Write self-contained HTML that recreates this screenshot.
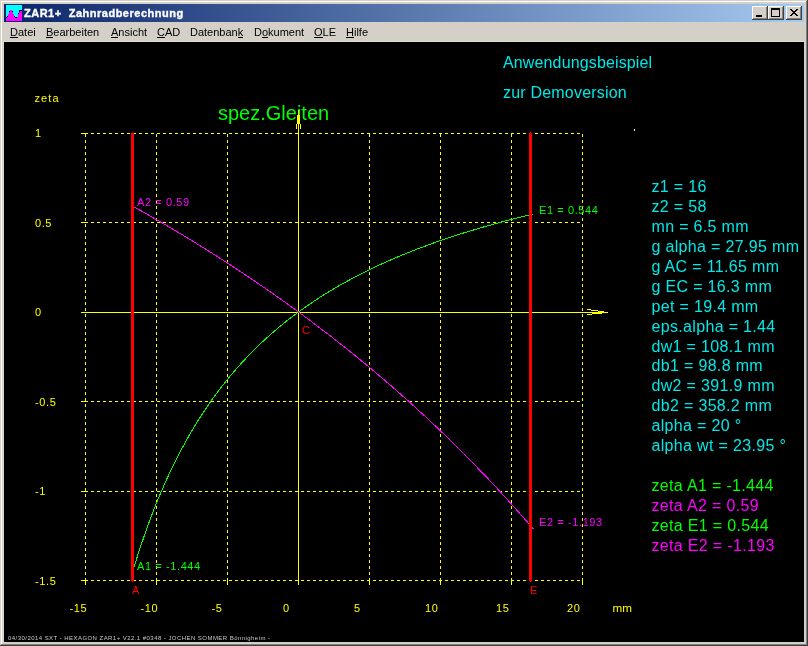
<!DOCTYPE html>
<html><head><meta charset="utf-8">
<style>
html,body{margin:0;padding:0;width:808px;height:646px;overflow:hidden;background:#D4D0C8;}
body{position:relative;font-family:"Liberation Sans",sans-serif;}
.abs{position:absolute;}
#title{left:4px;top:4px;width:800px;height:18px;background:linear-gradient(to right,#0A246A,#A6CAF0);}
#ttext{left:24px;top:4px;height:18px;line-height:18px;color:#fff;font-weight:bold;font-size:12px;white-space:pre;}
.btn{position:absolute;top:6px;width:16px;height:14px;background:#D4D0C8;box-sizing:border-box;
 box-shadow:inset -1px -1px #404040, inset 1px 1px #FFFFFF, inset -2px -2px #808080;}
#menu{left:4px;top:22px;width:800px;height:20px;}
.mi{will-change:transform;position:absolute;top:22px;height:20px;line-height:20px;font-size:11px;color:#000;white-space:pre;}
.mi u{text-decoration:none;position:relative;} .mi u::after{content:"";position:absolute;left:0;right:0;bottom:0px;height:1px;background:#000;}
#client{left:4px;top:42px;width:800px;height:600px;background:#000;}
svg text{font-family:"Liberation Sans",sans-serif;}
</style></head><body>
<div class="abs" style="left:0;top:0;width:808px;height:1px;background:#D4D0C8"></div>
<div class="abs" style="left:1px;top:1px;width:805px;height:1px;background:#FFFFFF"></div>
<div class="abs" style="left:1px;top:1px;width:1px;height:643px;background:#FFFFFF"></div>
<div class="abs" style="left:807px;top:0;width:1px;height:646px;background:#404040"></div>
<div class="abs" style="left:806px;top:1px;width:1px;height:644px;background:#808080"></div>
<div class="abs" style="left:0;top:645px;width:808px;height:1px;background:#404040"></div>
<div class="abs" style="left:1px;top:644px;width:806px;height:1px;background:#808080"></div>
<div id="title" class="abs"></div>
<svg class="abs" style="left:6px;top:5px" width="16" height="16" viewBox="0 0 16 16" shape-rendering="crispEdges"><rect width="16" height="16" fill="#00FFFF"/><rect x="0" y="13" width="1" height="3" fill="#FF00FF"/><rect x="1" y="12" width="1" height="4" fill="#FF00FF"/><rect x="2" y="9" width="1" height="7" fill="#FF00FF"/><rect x="3" y="7" width="1" height="9" fill="#FF00FF"/><rect x="4" y="5" width="1" height="11" fill="#FF00FF"/><rect x="5" y="5" width="1" height="11" fill="#FF00FF"/><rect x="6" y="7" width="1" height="9" fill="#FF00FF"/><rect x="7" y="9" width="1" height="7" fill="#FF00FF"/><rect x="8" y="12" width="1" height="4" fill="#FF00FF"/><rect x="9" y="13" width="1" height="3" fill="#FF00FF"/><rect x="10" y="13" width="1" height="3" fill="#FF00FF"/><rect x="11" y="12" width="1" height="4" fill="#FF00FF"/><rect x="12" y="9" width="1" height="7" fill="#FF00FF"/><rect x="13" y="7" width="1" height="9" fill="#FF00FF"/><rect x="14" y="6" width="1" height="10" fill="#FF00FF"/><rect x="15" y="6" width="1" height="10" fill="#FF00FF"/><rect x="0" y="12" width="1" height="1" fill="#000"/><rect x="1" y="11" width="1" height="1" fill="#000"/><rect x="3" y="6" width="1" height="1" fill="#000"/><rect x="6" y="6" width="1" height="1" fill="#000"/><rect x="8" y="11" width="1" height="1" fill="#000"/><rect x="9" y="12" width="1" height="1" fill="#000"/><rect x="10" y="12" width="1" height="1" fill="#000"/><rect x="12" y="8" width="1" height="1" fill="#000"/><rect x="13" y="5" width="1" height="1" fill="#000"/><rect x="13" y="6" width="1" height="1" fill="#000"/><rect x="14" y="5" width="1" height="1" fill="#000"/><rect x="15" y="5" width="1" height="1" fill="#000"/></svg>
<svg class="abs" style="left:0;top:0;will-change:transform" width="300" height="22"><text x="24" y="17" font-size="11" font-weight="bold" fill="#fff" stroke="#fff" stroke-width="0.35" letter-spacing="0.5" style="white-space:pre">ZAR1+  Zahnradberechnung</text></svg>
<div class="btn" style="left:752px"><div class="abs" style="left:4px;top:9px;width:6px;height:2px;background:#000"></div></div>
<div class="btn" style="left:768px"><div class="abs" style="left:3px;top:2px;width:9px;height:9px;box-sizing:border-box;border:1px solid #000;border-top-width:2px"></div></div>
<div class="btn" style="left:786px"><svg class="abs" style="left:4px;top:3px" width="8" height="7" viewBox="0 0 8 7" shape-rendering="crispEdges"><path d="M0,0h2v1h-2zM6,0h2v1h-2zM1,1h2v1h-2zM5,1h2v1h-2zM2,2h4v1h-4zM3,3h2v1h-2zM2,4h4v1h-4zM1,5h2v1h-2zM5,5h2v1h-2zM0,6h2v1h-2zM6,6h2v1h-2z" fill="#000"/></svg></div>
<div class="mi" style="left:9.5px"><u>D</u>atei</div>
<div class="mi" style="left:46px"><u>B</u>earbeiten</div>
<div class="mi" style="left:111px"><u>A</u>nsicht</div>
<div class="mi" style="left:157px"><u>C</u>AD</div>
<div class="mi" style="left:190px">Datenban<u>k</u></div>
<div class="mi" style="left:254px">D<u>o</u>kument</div>
<div class="mi" style="left:314px"><u>O</u>LE</div>
<div class="mi" style="left:346px"><u>H</u>ilfe</div>
<div class="abs" style="left:3px;top:41px;width:802px;height:1px;background:#E2DED6"></div>
<div class="abs" style="left:3px;top:41px;width:1px;height:602px;background:#DCD8D0"></div>
<div id="client" class="abs"></div>
<svg class="abs" style="left:0;top:0;will-change:transform" width="808" height="646" viewBox="0 0 808 646">
<g fill="#00E8E8" font-size="16" letter-spacing="0.2">
<text x="503" y="68" letter-spacing="0.14">Anwendungsbeispiel</text>
<text x="503" y="98">zur Demoversion</text>
</g>
<text x="218" y="120" font-size="20" fill="#00FF00">spez.Gleiten</text>
<g fill="#FFFF00" font-size="11" letter-spacing="0.6">
<text x="34.5" y="102" letter-spacing="1.1">zeta</text>
<text x="35" y="137">1</text>
<text x="35" y="227">0.5</text>
<text x="35" y="316">0</text>
<text x="35" y="406">-0.5</text>
<text x="35" y="495">-1</text>
<text x="35" y="585">-1.5</text>
<text x="69.5" y="612">-15</text>
<text x="140.5" y="612">-10</text>
<text x="211.5" y="612">-5</text>
<text x="283" y="612">0</text>
<text x="354" y="612">5</text>
<text x="425" y="612">10</text>
<text x="496" y="612">15</text>
<text x="567" y="612">20</text>
<text x="612.5" y="612" letter-spacing="0" textLength="19.5" lengthAdjust="spacingAndGlyphs">mm</text>
</g>
<g stroke="#FFFF00" stroke-width="1" shape-rendering="crispEdges" fill="none">
<style>.d{stroke-dasharray:3 3}</style>
<line x1="81" y1="133.5" x2="85" y2="133.5"/>
<line class="d" x1="85" y1="133.5" x2="582" y2="133.5"/>
<line x1="81" y1="222.5" x2="85" y2="222.5"/>
<line class="d" x1="85" y1="222.5" x2="582" y2="222.5"/>
<line x1="81" y1="401.5" x2="85" y2="401.5"/>
<line class="d" x1="85" y1="401.5" x2="582" y2="401.5"/>
<line x1="81" y1="491.5" x2="85" y2="491.5"/>
<line class="d" x1="85" y1="491.5" x2="582" y2="491.5"/>
<line x1="81" y1="580.5" x2="85" y2="580.5"/>
<line class="d" x1="85" y1="580.5" x2="582" y2="580.5"/>
<line class="d" x1="85.5" y1="134" x2="85.5" y2="580"/>
<line x1="85.5" y1="580" x2="85.5" y2="585"/>
<line class="d" x1="156.5" y1="134" x2="156.5" y2="580"/>
<line x1="156.5" y1="580" x2="156.5" y2="585"/>
<line class="d" x1="227.5" y1="134" x2="227.5" y2="580"/>
<line x1="227.5" y1="580" x2="227.5" y2="585"/>
<line class="d" x1="369.5" y1="134" x2="369.5" y2="580"/>
<line x1="369.5" y1="580" x2="369.5" y2="585"/>
<line class="d" x1="440.5" y1="134" x2="440.5" y2="580"/>
<line x1="440.5" y1="580" x2="440.5" y2="585"/>
<line class="d" x1="511.5" y1="134" x2="511.5" y2="580"/>
<line x1="511.5" y1="580" x2="511.5" y2="585"/>
<line class="d" x1="582.5" y1="134" x2="582.5" y2="580"/>
<line x1="582.5" y1="580" x2="582.5" y2="585"/>
<line x1="81" y1="312.5" x2="608" y2="312.5"/>
<line x1="298.5" y1="110" x2="298.5" y2="585"/>
</g>
<g fill="#FFFF00" shape-rendering="crispEdges"><rect x="297" y="115" width="3" height="9"/><rect x="296" y="124" width="1" height="5"/><rect x="300" y="124" width="1" height="5"/><rect x="587" y="309" width="4" height="1"/><rect x="591" y="310" width="7" height="1"/><rect x="598" y="311" width="6" height="1"/><rect x="592" y="313" width="10" height="1"/><rect x="587" y="314" width="5" height="1"/></g>
<g fill="none" stroke-width="1" shape-rendering="crispEdges">
<polyline points="131.5,575.6 134.0,567.2 136.5,559.1 139.0,551.2 141.6,543.6 144.1,536.3 146.6,529.1 149.1,522.2 151.6,515.5 154.1,509.1 156.6,502.8 159.1,496.7 161.7,490.7 164.2,484.9 166.7,479.3 169.2,473.9 171.7,468.6 174.2,463.4 176.7,458.4 179.2,453.5 181.8,448.7 184.3,444.1 186.8,439.6 189.3,435.1 191.8,430.8 194.3,426.6 196.8,422.5 199.3,418.5 201.9,414.6 204.4,410.8 206.9,407.1 209.4,403.4 211.9,399.8 214.4,396.4 216.9,392.9 219.4,389.6 221.9,386.3 224.5,383.1 227.0,380.0 229.5,376.9 232.0,373.9 234.5,371.0 237.0,368.1 239.5,365.3 242.1,362.5 244.6,359.8 247.1,357.1 249.6,354.5 252.1,351.9 254.6,349.4 257.1,347.0 259.6,344.5 262.1,342.1 264.7,339.8 267.2,337.5 269.7,335.3 272.2,333.1 274.7,330.9 277.2,328.7 279.7,326.6 282.2,324.6 284.8,322.5 287.3,320.5 289.8,318.6 292.3,316.6 294.8,314.7 297.3,312.9 299.8,311.0 302.4,309.2 304.9,307.5 307.4,305.7 309.9,304.0 312.4,302.3 314.9,300.6 317.4,299.0 319.9,297.3 322.4,295.7 325.0,294.2 327.5,292.6 330.0,291.1 332.5,289.6 335.0,288.1 337.5,286.6 340.0,285.2 342.6,283.8 345.1,282.4 347.6,281.0 350.1,279.6 352.6,278.3 355.1,276.9 357.6,275.6 360.1,274.3 362.6,273.1 365.2,271.8 367.7,270.6 370.2,269.3 372.7,268.1 375.2,266.9 377.7,265.8 380.2,264.6 382.8,263.5 385.3,262.3 387.8,261.2 390.3,260.1 392.8,259.0 395.3,257.9 397.8,256.9 400.3,255.8 402.8,254.8 405.4,253.8 407.9,252.7 410.4,251.7 412.9,250.7 415.4,249.8 417.9,248.8 420.4,247.8 422.9,246.9 425.5,246.0 428.0,245.0 430.5,244.1 433.0,243.2 435.5,242.3 438.0,241.5 440.5,240.6 443.1,239.7 445.6,238.9 448.1,238.0 450.6,237.2 453.1,236.4 455.6,235.5 458.1,234.7 460.6,233.9 463.1,233.1 465.7,232.4 468.2,231.6 470.7,230.8 473.2,230.1 475.7,229.3 478.2,228.6 480.7,227.8 483.2,227.1 485.8,226.4 488.3,225.7 490.8,225.0 493.3,224.3 495.8,223.6 498.3,222.9 500.8,222.2 503.3,221.5 505.9,220.9 508.4,220.2 510.9,219.5 513.4,218.9 515.9,218.2 518.4,217.6 520.9,217.0 523.5,216.4 526.0,215.7 528.5,215.1 531.0,214.5 533.5,213.9" stroke="#00FF00"/>
<polyline points="131.5,205.5 134.0,206.9 136.5,208.3 139.0,209.7 141.6,211.1 144.1,212.5 146.6,213.9 149.1,215.4 151.6,216.8 154.1,218.3 156.6,219.7 159.1,221.2 161.7,222.6 164.2,224.1 166.7,225.6 169.2,227.0 171.7,228.5 174.2,230.0 176.7,231.5 179.2,233.0 181.8,234.5 184.3,236.0 186.8,237.6 189.3,239.1 191.8,240.6 194.3,242.1 196.8,243.7 199.3,245.2 201.9,246.8 204.4,248.4 206.9,249.9 209.4,251.5 211.9,253.1 214.4,254.7 216.9,256.3 219.4,257.9 221.9,259.5 224.5,261.1 227.0,262.7 229.5,264.4 232.0,266.0 234.5,267.6 237.0,269.3 239.5,271.0 242.1,272.6 244.6,274.3 247.1,276.0 249.6,277.7 252.1,279.4 254.6,281.1 257.1,282.8 259.6,284.5 262.1,286.2 264.7,287.9 267.2,289.7 269.7,291.4 272.2,293.2 274.7,294.9 277.2,296.7 279.7,298.5 282.2,300.3 284.8,302.0 287.3,303.8 289.8,305.7 292.3,307.5 294.8,309.3 297.3,311.1 299.8,313.0 302.4,314.8 304.9,316.7 307.4,318.5 309.9,320.4 312.4,322.3 314.9,324.2 317.4,326.1 319.9,328.0 322.4,329.9 325.0,331.8 327.5,333.8 330.0,335.7 332.5,337.6 335.0,339.6 337.5,341.6 340.0,343.6 342.6,345.5 345.1,347.5 347.6,349.5 350.1,351.6 352.6,353.6 355.1,355.6 357.6,357.7 360.1,359.7 362.6,361.8 365.2,363.8 367.7,365.9 370.2,368.0 372.7,370.1 375.2,372.2 377.7,374.4 380.2,376.5 382.8,378.6 385.3,380.8 387.8,383.0 390.3,385.1 392.8,387.3 395.3,389.5 397.8,391.7 400.3,393.9 402.8,396.2 405.4,398.4 407.9,400.6 410.4,402.9 412.9,405.2 415.4,407.5 417.9,409.8 420.4,412.1 422.9,414.4 425.5,416.7 428.0,419.0 430.5,421.4 433.0,423.8 435.5,426.1 438.0,428.5 440.5,430.9 443.1,433.3 445.6,435.8 448.1,438.2 450.6,440.7 453.1,443.1 455.6,445.6 458.1,448.1 460.6,450.6 463.1,453.1 465.7,455.6 468.2,458.2 470.7,460.7 473.2,463.3 475.7,465.9 478.2,468.5 480.7,471.1 483.2,473.7 485.8,476.3 488.3,479.0 490.8,481.6 493.3,484.3 495.8,487.0 498.3,489.7 500.8,492.4 503.3,495.2 505.9,497.9 508.4,500.7 510.9,503.5 513.4,506.3 515.9,509.1 518.4,511.9 520.9,514.8 523.5,517.6 526.0,520.5 528.5,523.4 531.0,526.3 533.5,529.2" stroke="#FF00FF"/>
</g>
<g fill="#FF0000" shape-rendering="crispEdges">
<rect x="131" y="133" width="3" height="448"/><rect x="132" y="132" width="1" height="450"/>
<rect x="529" y="133" width="3" height="448"/><rect x="530" y="132" width="1" height="450"/>
</g>
<g font-size="11" letter-spacing="0.6">
<text x="137" y="206" fill="#FF00FF">A2 = 0.59</text>
<text x="137" y="570" fill="#00FF00">A1 = -1.444</text>
<text x="539" y="214" fill="#00FF00">E1 = 0.544</text>
<text x="539" y="526" fill="#FF00FF">E2 = -1.193</text>
<text x="132" y="594" fill="#FF0000">A</text>
<text x="530" y="594" fill="#FF0000">E</text>
<text x="302" y="334" fill="#FF0000">C</text>
</g>
<g font-size="16" letter-spacing="0.33">
<text x="651.5" y="192" class="cy">z1 = 16</text>
<text x="651.5" y="212" class="cy">z2 = 58</text>
<text x="651.5" y="232" class="cy">mn = 6.5 mm</text>
<text x="651.5" y="252" class="cy">g alpha = 27.95 mm</text>
<text x="651.5" y="272" class="cy">g AC = 11.65 mm</text>
<text x="651.5" y="292" class="cy">g EC = 16.3 mm</text>
<text x="651.5" y="312" class="cy">pet = 19.4 mm</text>
<text x="651.5" y="332" class="cy">eps.alpha = 1.44</text>
<text x="651.5" y="352" class="cy">dw1 = 108.1 mm</text>
<text x="651.5" y="371" class="cy">db1 = 98.8 mm</text>
<text x="651.5" y="391" class="cy">dw2 = 391.9 mm</text>
<text x="651.5" y="411" class="cy">db2 = 358.2 mm</text>
<text x="651.5" y="431" class="cy">alpha = 20 °</text>
<text x="651.5" y="451" class="cy">alpha wt = 23.95 °</text>
<text x="651.5" y="491" class="gr">zeta A1 = -1.444</text>
<text x="651.5" y="511" class="mg">zeta A2 = 0.59</text>
<text x="651.5" y="531" class="gr">zeta E1 = 0.544</text>
<text x="651.5" y="551" class="mg">zeta E2 = -1.193</text>
</g>
<style>.cy{fill:#00E8E8} .gr{fill:#00FF00} .mg{fill:#FF00FF}</style>
<rect x="634" y="129" width="1" height="2" fill="#fff"/>
<text x="8" y="640" font-size="6" fill="#C8C8C8" letter-spacing="0.45">04/30/2014 SXT - HEXAGON ZAR1+ V22.1 #0348 - JOCHEN SOMMER  Bönnigheim -</text>
</svg>
</body></html>
